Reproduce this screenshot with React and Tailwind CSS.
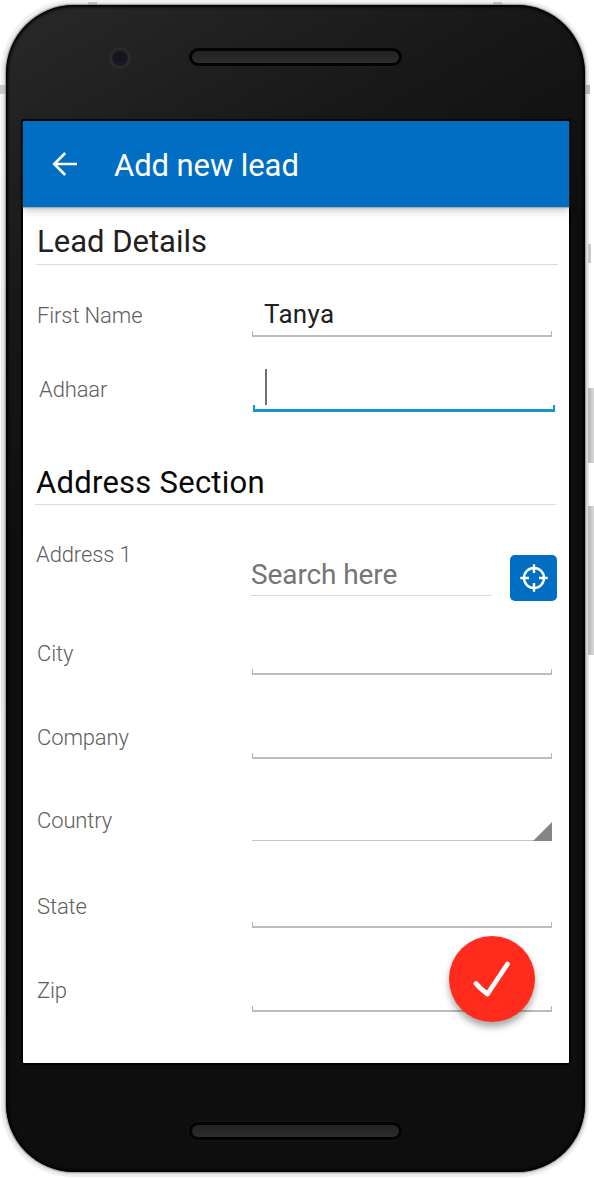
const titleText = "block whitespace-nowrap text-[31px] leading-9";

function Section({ title, className, textClass }) {
  return (
    <div className={`flex shrink-0 items-end border-b border-[#dcdcdc] ${className}`}>
      <h2 className={`${titleText} ${textClass}`}>{title}</h2>
    </div>
  );
}

function Row({ label, className, labelClass = "pl-[14px] pb-2", children }) {
  return (
    <div className={`flex shrink-0 items-end ${className}`}>
      <label className={`w-[229px] shrink-0 whitespace-nowrap text-[22px] font-light leading-[26px] tracking-[-0.12px] text-[#606060] ${labelClass}`}>
        {label}
      </label>
      {children}
    </div>
  );
}

function Underline() {
  return <div className="h-[6px] w-[300px] border-x-[1.5px] border-b-2 border-x-[#b4b4b4] border-b-[#bcbcbc]" />;
}

function Grille({ className }) {
  return (
    <div
      className={`h-[18px] w-[213px] rounded-full border-[3px] border-[#030303] bg-gradient-to-b from-[#222] to-[#2c2c2c] shadow-[0_0_3px_#222] ${className}`}
    />
  );
}

export default function App() {
  return (
    <div className="relative h-[1178px] w-[594px] overflow-hidden bg-white font-['Roboto','Liberation_Sans',sans-serif]">
      <div className="absolute left-[1px] top-0 h-[1177px] w-[588px] rounded-[72px] bg-gradient-to-b from-[#f1f1f1] via-[#e3e3e3] to-[#eeeeee] shadow-[0_0_2px_#eee]" />
      <div className="absolute left-[88px] top-[2px] h-[4px] w-[9px] bg-[#c4c4c4]" />
      <div className="absolute left-[493px] top-[2px] h-[4px] w-[9px] bg-[#c4c4c4]" />
      <div className="absolute left-0 top-[85px] h-[9px] w-[6px] bg-[#c8c8c8]" />
      <div className="absolute left-[584px] top-[85px] h-[9px] w-[6px] bg-[#b8b8b8]" />
      <div className="absolute left-[588px] top-[244px] h-[19px] w-[3px] bg-[#c8c8c8]" />
      <div className="absolute left-[588px] top-[388px] h-[75px] w-[6px] bg-gradient-to-r from-[#b5b5b5] to-[#dadada]" />
      <div className="absolute left-[588px] top-[506px] h-[149px] w-[6px] bg-gradient-to-r from-[#b5b5b5] to-[#dadada]" />

      <div className="relative ml-[6px] mt-[5px] flex h-[1167px] w-[579px] flex-col rounded-[68px] bg-[linear-gradient(150deg,#292929_0%,#181818_20%,#0e0e0e_36%,#0e0e0e_100%)] shadow-[inset_0_0_3px_2px_#000,0_0_2px_1px_#888]">
        <div className="flex h-[116px] shrink-0 pt-[43px]">
          <div className="-mt-px ml-[103px] flex h-[22px] w-[22px] items-center justify-center rounded-full bg-[#2b2b2b]">
            <div className="h-[16px] w-[16px] rounded-full bg-[radial-gradient(circle,#17121f_30%,#211e26_100%)]" />
          </div>
          <Grille className="ml-[58px]" />
        </div>

        <main className="relative ml-[17px] flex h-[942px] w-[546px] shrink-0 flex-col rounded-[1px] bg-white shadow-[0_0_0_2px_#020202]">
          <header className="relative flex h-[86px] shrink-0 items-center bg-[#006ec2] shadow-[0_1px_1px_#b0a8a4,0_3px_8px_rgba(0,0,0,0.25)]">
            <svg className="ml-[29px] shrink-0" width="26" height="26" viewBox="0 0 26 26" fill="none" stroke="white" strokeWidth="2.6">
              <path d="M25 13H2M13.2 2L2.2 13L13.2 24" />
            </svg>
            <h1 className={`${titleText} ml-[36px] mt-[4px] tracking-[-0.08px] text-white`}>Add new lead</h1>
          </header>

          <Section title="Lead Details" className="ml-[13px] h-[58px] w-[522px] pb-[4px]" textClass="pl-px text-[#212121]" />

          <Row label="First Name" className="h-[72px]">
            <div className="relative flex flex-col">
              <span className="-mb-[2px] h-[34px] pl-3 text-[26px] leading-[30px] tracking-[0.3px] text-[#212121]">Tanya</span>
              <Underline />
            </div>
          </Row>

          <Row label="Adhaar" className="h-[75px]" labelClass="pl-[16px] pb-[9px] mr-[2px]">
            <div className="-ml-px flex flex-col">
              <div className="ml-[12px] h-[36px] w-[2px] bg-[#707070]" />
              <div className="h-[7px] w-[302px] border-2 border-t-0 border-b-[3px] border-[#1495d0]" />
            </div>
          </Row>

          <Section title="Address Section" className="ml-[12px] h-[93px] w-[521px] pb-[3px]" textClass="pl-px tracking-[0.25px] text-[#080808]" />

          <Row label="Address 1" className="h-[91px]" labelClass="pl-[13px] pb-[28px] -mr-px">
            <div className="flex h-[37px] w-[241px] items-start border-b border-[#dadada]">
              <span className="whitespace-nowrap text-[28px] leading-8 tracking-[-0.1px] text-[#757575]">Search here</span>
            </div>
            <button className="-mb-[5px] ml-[18px] flex h-[46px] w-[47px] items-center justify-center rounded-[5px] bg-[#006ec2]" aria-label="Use current location">
              <svg width="28" height="28" viewBox="0 0 28 28" fill="none" stroke="white" strokeWidth="2.4">
                <circle cx="14" cy="14" r="10" />
                <path d="M14 .3V9M14 19V27.7M.3 14H9M19 14H27.7" />
              </svg>
            </button>
          </Row>

          <Row label="City" className="h-[79px]"><Underline /></Row>
          <Row label="Company" className="h-[84px]"><Underline /></Row>
          <Row label="Country" className="h-[82px]" labelClass="pl-[14px] pb-[7px]">
            <div className="flex h-[20px] w-[300px] items-end justify-end border-b border-[#c4c4c4]">
              <svg className="-mb-px" width="19" height="19" viewBox="0 0 19 19">
                <path d="M19 0V19H0Z" fill="#858585" />
              </svg>
            </div>
          </Row>
          <Row label="State" className="h-[87px]"><Underline /></Row>
          <Row label="Zip" className="h-[84px]"><Underline /></Row>

          <button className="absolute left-[426px] top-[815px] flex h-[86px] w-[86px] items-center justify-center rounded-full bg-[#ff2c1e] shadow-[0_5px_7px_rgba(0,0,0,0.35)]" aria-label="Save lead">
            <svg width="86" height="86" viewBox="0 0 86 86" fill="none" stroke="white" strokeLinecap="round" strokeLinejoin="round">
              <path d="M27 47.5Q31 52.5 38.5 58L58.5 28" strokeWidth="4.8" />
            </svg>
          </button>
        </main>

        <Grille className="ml-[183px] mt-[59px] shrink-0" />
      </div>
    </div>
  );
}
